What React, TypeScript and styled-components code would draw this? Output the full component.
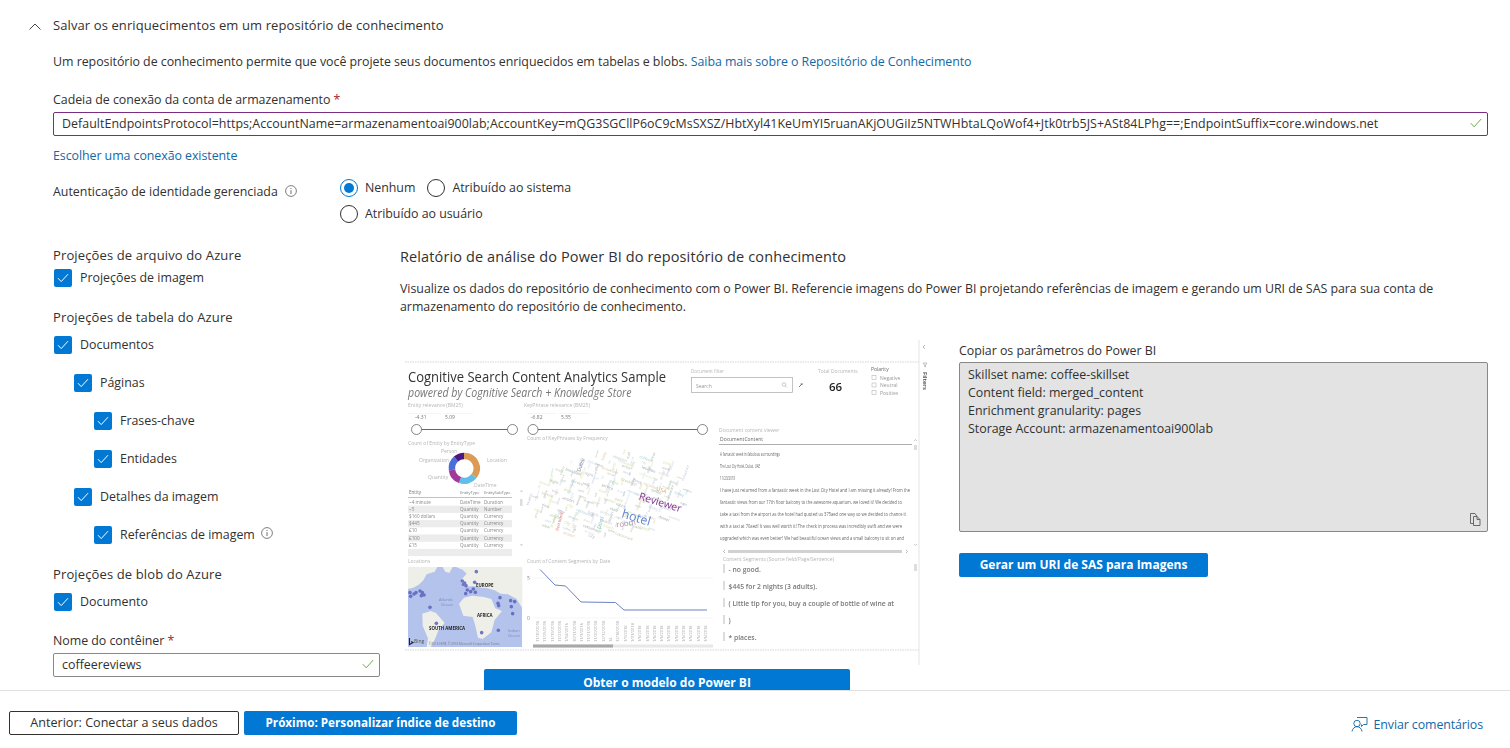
import React from 'react';
import styled, { createGlobalStyle } from 'styled-components';

const Global = createGlobalStyle`
  html, body { margin: 0; padding: 0; background: #fff; }
  body { font-family: "Open Sans", "Noto Sans", "Liberation Sans", sans-serif; font-size: 12.4px; color: #323130; }
`;

const Page = styled.div`width: 1510px; height: 748px; overflow: hidden; display: flex; flex-direction: column;`;
const Main = styled.main`height: 690px; overflow: hidden; padding: 17px 22px 0 53px; box-sizing: border-box; flex: none;`;
const SectionHeader = styled.div`display: flex; align-items: center; gap: 12px; margin-left: -24px; height: 18px; line-height: 16px; font-size: 13px; letter-spacing: 0.1px;`;
const SectionTitle = styled.span`margin-top: -2px;`;
const Line = styled.div<{ $top?: number }>`line-height: 18px; height: 18px; margin-top: ${p => p.$top ?? 0}px; white-space: nowrap; letter-spacing: -0.03px;`;
const GroupTitle = styled(Line)`font-size: 13px; line-height: 16px; letter-spacing: 0.13px;`;
const Link = styled.a`color: #1168a8; text-decoration: none; letter-spacing: -0.06px;`;
const Required = styled.span`color: #a4262c;`;
const InputBox = styled.div<{ $focus?: boolean; $w?: string }>`
  display: flex; align-items: center; justify-content: space-between; box-sizing: border-box;
  height: 24px; margin-top: 3px; width: ${p => p.$w ?? '100%'};
  border: 1px solid ${p => (p.$focus ? '#7b2d82' : '#8a8886')}; border-radius: 2px; padding: 0 5px 2px 8px; white-space: nowrap;
`;
const ConnText = styled.span`font-size: 12.4px; letter-spacing: 0.045px;`;
const IdentityRow = styled.div`display: flex; margin-top: 14px;`;
const IdentityLabel = styled.div`width: 286px; flex: none; display: flex; align-items: center; height: 18px; margin-top: 3px; gap: 7px;`;
const RadioGrid = styled.div`display: flex; flex-direction: column; gap: 8px;`;
const RadioRow = styled.div`display: flex; gap: 11px;`;
const RadioItem = styled.div`display: flex; align-items: center; gap: 7px; line-height: 18px; margin-left: 1px; letter-spacing: -0.03px;`;
const RadioDot = styled.span<{ $on?: boolean }>`
  width: 18px; height: 18px; box-sizing: border-box; border-radius: 50%; border: 1px solid ${p => (p.$on ? '#0078d4' : '#323130')};
  display: flex; align-items: center; justify-content: center; flex: none;
  &::after { content: ''; width: 10px; height: 10px; border-radius: 50%; background: ${p => (p.$on ? '#0078d4' : 'transparent')}; }
`;
const Columns = styled.div`display: flex; margin-top: 24px;`;
const LeftCol = styled.div`width: 347px; flex: none;`;
const RightCol = styled.div`flex: 1; min-width: 0; padding-top: 1px;`;
const CheckRow = styled.div<{ $level?: number; $top?: number }>`
  display: flex; align-items: center; gap: 8px; height: 18px; line-height: 18px; margin-top: ${p => p.$top ?? 20}px;
  margin-left: ${p => 1 + (p.$level ?? 0) * 20}px;
`;
const CheckBox = styled.span`
  width: 18px; height: 18px; border-radius: 2px; background: #0078d4; flex: none; display: flex; align-items: center; justify-content: center;
`;
const InfoWrap = styled.span`display: inline-flex; margin-left: 6px; margin-top: -2px;`;
const Heading = styled.div`font-size: 14.5px; letter-spacing: 0.12px; line-height: 18px; white-space: nowrap;`;
const Para = styled.p`margin: 14px 0 0; line-height: 18px; width: 1050px; letter-spacing: -0.03px;`;
const PreviewRow = styled.div`display: flex; margin-top: 24px; gap: 29px;`;
const PreviewCol = styled.div`width: 530px; flex: none;`;
const PreviewSvg = styled.svg`display: block; filter: blur(0.4px);`;
const PrimaryButton = styled.button<{ $w: number; $h?: number; $ml?: number; $fs?: number }>`
  display: block; box-sizing: border-box; border: 0; border-radius: 2px; background: #0078d4; color: #fff; padding: 0 0 2px;
  font-family: inherit; font-size: ${p => p.$fs ?? 12}px; font-weight: 700; width: ${p => p.$w}px; height: ${p => p.$h ?? 24}px; margin-left: ${p => p.$ml ?? 0}px; flex: none;
`;
const ParamsCol = styled.div`flex: 1; padding-top: 2px;`;
const ParamsBox = styled.div`
  position: relative; box-sizing: border-box; height: 170px; margin-top: 2px; background: #e3e3e3; border: 1px solid #8a8886; border-radius: 2px;
  padding: 3px 8px; line-height: 18px;
`;
const CopyIcon = styled.svg`position: absolute; right: 6px; bottom: 5px;`;
const GenButton = styled(PrimaryButton)`margin-top: 21px;`;
const Footer = styled.footer`
  flex: 1; border-top: 1px solid #e1e1e1; display: flex; align-items: flex-start; padding: 20px 27px 0 9px; box-sizing: border-box; gap: 5px;
`;
const SecondaryButton = styled.button`
  box-sizing: border-box; width: 230px; height: 24px; background: #fff; border: 1px solid #323130; border-radius: 2px; padding: 0 0 2px;
  font-family: inherit; font-size: 12.6px; color: #323130;
`;
const Feedback = styled.a`margin-left: auto; display: flex; align-items: center; gap: 6px; height: 26px; color: #1168a8; text-decoration: none; letter-spacing: -0.1px;`;

const Info = ({ s = 12 }: { s?: number }) => (
  <svg width={s} height={s} viewBox="0 0 12 12" fill="none">
    <circle cx="6" cy="6" r="5.4" stroke="#605e5c" strokeWidth=".8" />
    <path d="M6 5.2V9M6 3v1" stroke="#605e5c" strokeWidth=".9" />
  </svg>
);
const Tick = () => (
  <svg width="12" height="10" viewBox="0 0 12 10" fill="none"><path d="M1 5.2 4.2 8.6 11 1.2" stroke="#fff" strokeWidth="1" /></svg>
);
const GreenTick = () => (
  <svg width="12" height="10" viewBox="0 0 12 10" fill="none"><path d="M.8 5.2 4.2 8.8 11.2 1" stroke="#6bab48" strokeWidth="1" /></svg>
);
const Check = ({ level, top, children }: { level?: number; top?: number; children: React.ReactNode }) => (
  <CheckRow $level={level} $top={top}><CheckBox><Tick /></CheckBox><span>{children}</span></CheckRow>
);

const tableRows = [
  ['~4 minute', 'DateTime', 'Duration'], ['~5', 'Quantity', 'Number'], ['$160 dollars', 'Quantity', 'Currency'], ['$445', 'Quantity', 'Currency'],
  ['£10', 'Quantity', 'Currency'], ['£100', 'Quantity', 'Currency'], ['£15', 'Quantity', 'Currency'], ['£168', 'Quantity', 'Currency'],
];
const viewerLines = [
  'A fantastic week in fabulous surroundings', 'The Lost City Hotel, Dubai, UAE', '11/23/2018',
  'I have just returned from a fantastic week in the Lost City Hotel and I am missing it already! From the',
  'fantastic views from our 17th floor balcony to the awesome aquarium, we loved it! We decided to',
  'take a taxi from the airport as the hotel had quoted us 375aed one way so we decided to chance it',
  'with a taxi at 70aed! It was well worth it! The check in process was incredibly swift and we were',
  'upgraded which was even better! We had beautiful ocean views and a small balcony to sit on and',
];
const viewerWidths = [60, 40, 15, 190, 182, 186, 182, 184];
const segments = ['- no good.', '$445 for 2 nights (3 adults).', '( Little tip for you, buy a couple of bottle of wine at', ')', '* places.'];
const cloudColors = ['#a9b8a0', '#c9d8a0', '#b8c4d8', '#d9c8a8', '#a8a8a8', '#c8d8e8', '#b0b0c8', '#e4e4a8', '#98a8a8', '#c0c8b0', '#a8d0d8'];
const cloudWords = ['service', 'breakfast', 'location', 'pool', 'staff', 'beach', 'city', 'view', 'night', 'price', 'coffee', 'lobby', 'dinner', 'restaurant', 'airport'];
const cloud = Array.from({ length: 190 }, (_, i) => {
  const a = (i * 137.5 * Math.PI) / 180;
  const r = Math.sqrt(i / 190);
  const x0 = Math.cos(a) * r * 250;
  const y0 = Math.sin(a) * r * 125;
  const rad = (-16 * Math.PI) / 180;
  const x = 262 + x0 * Math.cos(rad) - y0 * Math.sin(rad);
  const y = 170 + x0 * Math.sin(rad) * 0.55 + y0 * Math.cos(rad);
  return { x, y, rot: i % 2 ? 20 : -70, fill: cloudColors[i % cloudColors.length], w: cloudWords[i % cloudWords.length], s: 7 + (i % 4) * 1.5 };
});
const mapDots = [[18,113],[20,124],[30,117],[36,113],[48,108],[55,113],[60,120],[52,122],[78,157],[175,78],[182,84],[186,92],[178,88],[217,50],[212,82],[190,105],[200,110],[208,102],[214,112],[185,116],[288,128],[282,145],[284,152],[320,137],[332,140],[322,155],[326,176],[283,226],[233,233],[97,205]];
const dates = ['11/30/2016','11/25/2016','11/19/2016','11/23/2016','1/14/2016','10/11/2018','11/3/2016','11/21/2016','11/20/2018','12/12/2018','14','12/18/2018','1/1/2018','1/31/2018','1/6/2018','1/6/2018','1/6/2018','1/6/2018','1/6/2018','1/6/2018','1/6/2018','1/6/2018','1/6/2018','1/6/2018'];

const Lab = ({ x, y, children, fill = '#b5b5b5', size = 5 }: { x: number; y: number; children: React.ReactNode; fill?: string; size?: number }) => (
  <text x={x} y={y} fontSize={size} fill={fill} fontFamily="Open Sans, sans-serif">{children}</text>
);

const Report = () => (
  <PreviewSvg width="530" height="329" viewBox="400 340 530 329">
    <path d="M405 362H919M405 650H919" stroke="#c9c9c9" strokeWidth=".8" strokeDasharray="1.5 1" />
    <path d="M919 340V665" stroke="#e4e4e4" strokeWidth="1" />
    <path d="M925 345l-2 2 2 2" stroke="#999" strokeWidth=".7" fill="none" />
    <path d="M923 363h4l-1.5 2v2l-1-.6v-1.4z" stroke="#888" strokeWidth=".5" fill="none" />
    <text transform="translate(922.5 372) rotate(90)" fontSize="6" fontWeight="600" fill="#444" fontFamily="Open Sans, sans-serif">Filters</text>

    <text transform="translate(408 381.5) scale(.86 1)" fontSize="15" fill="#333" fontFamily="Open Sans, sans-serif" textLength="300" lengthAdjust="spacingAndGlyphs">Cognitive Search Content Analytics Sample</text>
    <text transform="translate(408 396.5) scale(.86 1)" fontSize="12" fontStyle="italic" fill="#777" fontFamily="Open Sans, sans-serif" textLength="260" lengthAdjust="spacingAndGlyphs">powered by Cognitive Search + Knowledge Store</text>

    <Lab x={691} y={372.500} size={4.500}>Document filter</Lab>
    <rect x="691.5" y="377.5" width="101" height="15" fill="#fff" stroke="#aaa" strokeWidth=".7" />
    <Lab x={696} y={387.500} size={5} fill="#999">Search</Lab>
    <circle cx="784" cy="384.5" r="1.8" fill="none" stroke="#aaa" strokeWidth=".6" /><path d="M785.3 386l1.5 1.5" stroke="#aaa" strokeWidth=".6" />
    <path d="M799 387l3-3M800.500 384l2.500 0" stroke="#666" strokeWidth=".9" />
    <Lab x={818} y={373}>Total Documents</Lab>
    <text x="829" y="391" fontSize="11.5" fontWeight="600" fill="#222" fontFamily="Open Sans, sans-serif">66</text>
    <Lab x={871} y={371} fill="#666">Polarity</Lab>
    {['Negative', 'Neutral', 'Positive'].map((t, i) => (
      <g key={t}>
        <rect x="872" y={375.500 + i * 7.500} width="4" height="4" fill="none" stroke="#aaa" strokeWidth=".5" />
        <Lab x={880} y={379.500 + i * 7.500} fill="#999">{t}</Lab>
      </g>
    ))}

    <Lab x={408} y={407}>Entity relevance (BM25)</Lab>
    <Lab x={524} y={407}>KeyPhrase relevance (BM25)</Lab>
    <Lab x={415} y={419} fill="#777">-4.31</Lab><Lab x={445} y={419} fill="#777">5.09</Lab>
    <Lab x={531} y={419} fill="#777">-6.82</Lab><Lab x={561} y={419} fill="#777">5.55</Lab>
    <path d="M408.500 413.500H441M443 413.500H473M527 413.500H556M559 413.500H589" stroke="#eee" strokeWidth=".6" />
    <path d="M416 429.500H512M533 429.500H702" stroke="#666" strokeWidth="1" />
    {[416.500, 512.500, 533, 702.500].map(x => <circle key={x} cx={x} cy="429.500" r="5" fill="#fff" stroke="#666" strokeWidth=".8" />)}

    <Lab x={408} y={445}>Count of Entity by EntityType</Lab>
    <Lab x={527} y={440}>Count of KeyPhrases by Frequency</Lab>
    <Lab x={719} y={432}>Document content viewer</Lab>

    <g fill="none" strokeWidth="6.500">
      <path d="M464 456A12.300 12.300 0 0 1 474 476" stroke="#dc9a55" />
      <path d="M474 476A12.300 12.300 0 0 1 460 480" stroke="#5fbfe8" />
      <path d="M460 480A12.300 12.300 0 0 1 452 470" stroke="#a23a9a" />
      <path d="M452 470A12.300 12.300 0 0 1 456 459" stroke="#4a6fd8" />
      <path d="M456 459A12.300 12.300 0 0 1 464 456" stroke="#4a1880" />
    </g>
    <Lab x={441} y={453}>Person</Lab><Lab x={419} y={462}>Organization</Lab><Lab x={487} y={462}>Location</Lab>
    <Lab x={428} y={479}>Quantity</Lab><Lab x={474} y={487}>DateTime</Lab>

    <Lab x={409} y={494} fill="#777" size={4.6}>Entity</Lab><Lab x={460} y={494} fill="#777" size={4}>EntityType</Lab><Lab x={484} y={494} fill="#777" size={4}>EntitySubType</Lab>
    <path d="M408 497.500H512" stroke="#999" strokeWidth=".6" />
    {tableRows.map((r, i) => (
      <g key={r[0]}>
        {i % 2 === 1 && <rect x="408" y={498.500 + i * 7.200} width="104" height="7.200" fill="#ececec" />}
        {i < 7 && <><Lab x={409} y={503.500 + i * 7.200} fill="#888" size={4.6}>{r[0]}</Lab><Lab x={460} y={503.500 + i * 7.200} fill="#888" size={4.6}>{r[1]}</Lab><Lab x={484} y={503.500 + i * 7.200} fill="#888" size={4.6}>{r[2]}</Lab></>}
      </g>
    ))}
    <path d="M520.500 492l1 -1.500 1 1.500M520.500 544l1 1.500 1-1.500" stroke="#999" strokeWidth=".5" fill="none" />
    <rect x="520" y="499" width="2.500" height="7" fill="#ddd" />

    <g transform="translate(520 440) scale(.3333)" fontFamily="Open Sans, sans-serif">
      {cloud.map((c, i) => (
        <text key={i} transform={`translate(${c.x} ${c.y}) rotate(${c.rot})`} fontSize={c.s} fill={c.fill}>{c.w}</text>
      ))}
      <text transform="translate(355 178) rotate(17)" fontSize="31" fill="#7b2e8e">Reviewer</text>
      <text transform="translate(303 232) rotate(17)" fontSize="37" fill="#5f83cf">hotel</text>
      <text transform="translate(290 262) rotate(-8)" fontSize="23" fill="#b88aa0">room</text>
      <text transform="translate(181 96) rotate(-70)" fontSize="15" fill="#6a7aa0">Dubai</text>
      <text transform="translate(408 150) rotate(20)" fontSize="16" fill="#e0a468">USA</text>
      <text transform="translate(115 273) rotate(-75)" fontSize="12" fill="#e06a6a">Best hotel</text>
      <text transform="translate(240 268) rotate(-70)" fontSize="18" fill="#7ac8d8">pool</text>
    </g>

    <Lab x={720} y={441} fill="#666">DocumentContent</Lab>
    <path d="M719 444.500H912" stroke="#777" strokeWidth=".6" />
    {viewerLines.map((t, i) => (
      <text key={t} x="720" y={456 + i * 12} fontSize="4.500" fill="#666" fontFamily="Open Sans, sans-serif" textLength={viewerWidths[i]} lengthAdjust="spacingAndGlyphs">{t}</text>
    ))}
    <rect x="914" y="445" width="3" height="5" fill="#ddd" />
    <path d="M914 441l1.500-1.500 1.500 1.500M914 544l1.500 1.500 1.500-1.500" stroke="#999" strokeWidth=".5" fill="none" />
    <rect x="728" y="550" width="174" height="3" fill="#d2d2d2" />
    <path d="M725 550l-1.500 1.500 1.500 1.500M906 550l1.500 1.500-1.500 1.500" stroke="#777" strokeWidth=".5" fill="none" />

    <Lab x={723} y={561}>Content Segments (Source field/Page/Sentence)</Lab>
    {segments.map((s, i) => (
      <g key={s}>
        <rect x="723.500" y={564 + i * 17} width="1" height="9" fill="#bbb" />
        <text x="728.500" y={571.500 + i * 17} fontSize="6.800" fontWeight="600" fill="#777" fontFamily="Open Sans, sans-serif">{s}</text>
      </g>
    ))}
    <rect x="914" y="564" width="3" height="7" fill="#ddd" />

    <Lab x={408} y={563}>Locations</Lab>
    <rect x="408" y="567" width="114" height="80" fill="#b4c3ec" />
    <g transform="translate(404 555) scale(.3333)" fill="#efefea">
      <path d="M12 36H100L92 50 68 58 58 76 46 88 28 98 12 102Z" />
      <path d="M116 36H146L136 54 124 50Z" />
      <path d="M156 36H355V160L338 132 312 118 290 116 272 106 250 100 232 98 215 94 190 94 172 90 174 72 188 56 176 44Z" />
      <path d="M165 146 180 128 205 122 240 126 262 132 274 160 294 168 272 195 262 232 236 252 222 248 214 212 206 186 178 182Z" />
      <path d="M55 176 80 168 96 174 122 204 104 224 94 250 80 276 68 276 72 250 56 212Z" />
    </g>
    <g fill="#5a62bd" opacity=".85">
      {mapDots.map(([x, y]) => <circle key={`${x}-${y}`} cx={404 + x / 3} cy={555 + y / 3} r="1.800" />)}
    </g>
    <g fontFamily="Open Sans, sans-serif" fontWeight="700" fontSize="4.400" fill="#222">
      <text x="476" y="587">EUROPE</text><text x="477" y="617">AFRICA</text><text x="429" y="630">SOUTH AMERICA</text>
    </g>
    <g fontFamily="Open Sans, sans-serif" fontSize="4" fill="#7888c0">
      <text x="439" y="601">Atlantic</text><text x="441" y="606">Ocean</text><text x="508" y="632">Indian</text><text x="508" y="637">Ocean</text>
    </g>
    <path d="M409.500 638v6.500l3.500-2-1.800-1" stroke="#222" strokeWidth="1.100" fill="none" />
    <Lab x={414} y={643} fill="#555" size={5}>Bing</Lab>
    <Lab x={429} y={644.500} fill="#777" size={3}>©2016 HERE, © 2016 Microsoft Corporation Terms</Lab>

    <Lab x={527} y={563}>Count of Content Segments by Date</Lab>
    <path d="M533 578H713M533 618H713" stroke="#f0f0f0" strokeWidth=".6" />
    <Lab x={527} y={580} fill="#888">5</Lab><Lab x={527} y={620} fill="#888">0</Lab>
    <polyline points="540,569.500 555,585 565.500,586 581,602 615.500,602.500 624,610 707,610" fill="none" stroke="#6b82c2" strokeWidth="1" />
    {dates.map((d, i) => (
      <text key={i} transform={`translate(${539 + i * 7.300} 642) rotate(-90)`} fontSize="4" fill="#aaa" fontFamily="Open Sans, sans-serif">{d}</text>
    ))}
    <rect x="533" y="644.500" width="180" height="3" fill="#e8e8e8" />
    <rect x="533" y="644.500" width="80" height="3" fill="#a8a8a8" />
  </PreviewSvg>
);

export default function App() {
  return (
    <Page>
      <Global />
      <Main>
        <SectionHeader>
          <svg width="12" height="7" viewBox="0 0 12 7" fill="none"><path d="M.5 6.500 6 1l5.500 5.500" stroke="#323130" strokeWidth=".9" /></svg>
          <SectionTitle>Salvar os enriquecimentos em um repositório de conhecimento</SectionTitle>
        </SectionHeader>
        <Line $top={18}>Um repositório de conhecimento permite que você projete seus documentos enriquecidos em tabelas e blobs. <Link>Saiba mais sobre o Repositório de Conhecimento</Link></Line>
        <Line $top={20}>Cadeia de conexão da conta de armazenamento <Required>*</Required></Line>
        <InputBox $focus $w="1435px">
          <ConnText>DefaultEndpointsProtocol=https;AccountName=armazenamentoai900lab;AccountKey=mQG3SGCllP6oC9cMsSXSZ/HbtXyl41KeUmYI5ruanAKjOUGiIz5NTWHbtaLQoWof4+Jtk0trb5JS+ASt84LPhg==;EndpointSuffix=core.windows.net</ConnText>
          <GreenTick />
        </InputBox>
        <Line $top={11}><Link>Escolher uma conexão existente</Link></Line>
        <IdentityRow>
          <IdentityLabel>Autenticação de identidade gerenciada <Info /></IdentityLabel>
          <RadioGrid>
            <RadioRow>
              <RadioItem><RadioDot $on />Nenhum</RadioItem>
              <RadioItem><RadioDot />Atribuído ao sistema</RadioItem>
            </RadioRow>
            <RadioRow><RadioItem><RadioDot />Atribuído ao usuário</RadioItem></RadioRow>
          </RadioGrid>
        </IdentityRow>
        <Columns>
          <LeftCol>
            <GroupTitle>Projeções de arquivo do Azure</GroupTitle>
            <Check top={4}>Projeções de imagem</Check>
            <GroupTitle $top={22}>Projeções de tabela do Azure</GroupTitle>
            <Check top={9}>Documentos</Check>
            <Check level={1}>Páginas</Check>
            <Check level={2}>Frases-chave</Check>
            <Check level={2}>Entidades</Check>
            <Check level={1}>Detalhes da imagem</Check>
            <Check level={2}>Referências de imagem<InfoWrap><Info /></InfoWrap></Check>
            <GroupTitle $top={22}>Projeções de blob do Azure</GroupTitle>
            <Check top={9}>Documento</Check>
            <Line $top={21}>Nome do contêiner <Required>*</Required></Line>
            <InputBox $w="327px"><span>coffeereviews</span><GreenTick /></InputBox>
          </LeftCol>
          <RightCol>
            <Heading>Relatório de análise do Power BI do repositório de conhecimento</Heading>
            <Para>Visualize os dados do repositório de conhecimento com o Power BI. Referencie imagens do Power BI projetando referências de imagem e gerando um URI de SAS para sua conta de armazenamento do repositório de conhecimento.</Para>
            <PreviewRow>
              <PreviewCol>
                <Report />
                <PrimaryButton $w={366} $h={28} $ml={84}>Obter o modelo do Power BI</PrimaryButton>
              </PreviewCol>
              <ParamsCol>
                <Line>Copiar os parâmetros do Power BI</Line>
                <ParamsBox>
                  <div>Skillset name: coffee-skillset</div>
                  <div>Content field: merged_content</div>
                  <div>Enrichment granularity: pages</div>
                  <div>Storage Account: armazenamentoai900lab</div>
                  <CopyIcon width="11" height="13" viewBox="0 0 11 13" fill="none">
                    <path d="M3.500 3.500H7l3 3v6H3.500zM7 3.500v3h3M3.500 10.500H.5V.5H5l2 3" stroke="#605e5c" strokeWidth=".9" />
                  </CopyIcon>
                </ParamsBox>
                <GenButton $w={249}>Gerar um URI de SAS para Imagens</GenButton>
              </ParamsCol>
            </PreviewRow>
          </RightCol>
        </Columns>
      </Main>
      <Footer>
        <SecondaryButton>Anterior: Conectar a seus dados</SecondaryButton>
        <PrimaryButton $w={273} $fs={11.7}>Próximo: Personalizar índice de destino</PrimaryButton>
        <Feedback>
          <svg width="17" height="17" viewBox="0 0 17 17" fill="none">
            <path d="M6 1.500H16V8.500H12.500L10.500 10.500V8.500" stroke="#1168a8" strokeWidth=".9" />
            <circle cx="6" cy="7.500" r="3.200" stroke="#1168a8" strokeWidth=".9" fill="#fff" />
            <path d="M1 15.500C1.500 12.500 3.500 10.700 6 10.700S10.500 12.500 11 15.500" stroke="#1168a8" strokeWidth=".9" />
          </svg>
          Enviar comentários
        </Feedback>
      </Footer>
    </Page>
  );
}
